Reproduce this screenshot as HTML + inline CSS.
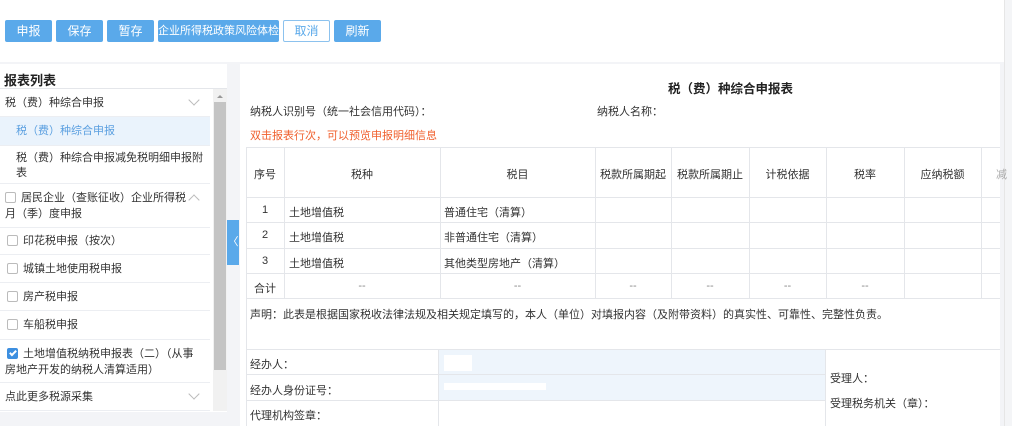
<!DOCTYPE html>
<html><head><meta charset="utf-8"><style>
*{margin:0;padding:0;box-sizing:border-box}
body{width:1012px;height:426px;overflow:hidden;background:#fff;font-family:"Liberation Sans","Noto Sans CJK SC",sans-serif;font-size:11px;color:#333;position:relative}
.a{position:absolute;white-space:nowrap}
.btn{position:absolute;top:20px;height:22px;background:#5aa9ea;color:#fff;font-size:12px;line-height:22px;text-align:center;border-radius:2px;white-space:nowrap;overflow:hidden}
.btn.o{background:#fff;color:#5aa9ea;border:1px solid #8cc2ee;line-height:20px}
.it{position:absolute;left:0;width:210px;border-bottom:1px solid #eceef2;font-size:11px;color:#333;white-space:nowrap}
.cb{display:inline-block;width:11px;height:11px;border:1px solid #bbb;border-radius:2px;vertical-align:-2px;margin-right:5px;background:#fff;position:relative}
.chev{position:absolute;right:12px;width:8px;height:8px;border-right:1px solid #bbb;border-bottom:1px solid #bbb}
.hl{position:absolute;background:#e4e6ea;height:1px}
.vl{position:absolute;background:#e4e6ea;width:1px}
.c{position:absolute;text-align:center;white-space:nowrap}
</style></head><body>
<div class="btn" style="left:5px;width:47px">申报</div>
<div class="btn" style="left:56px;width:47px">保存</div>
<div class="btn" style="left:107px;width:47px">暂存</div>
<div class="btn" style="left:158px;width:121px;font-size:11px">企业所得税政策风险体检</div>
<div class="btn o" style="left:283px;width:47px">取消</div>
<div class="btn" style="left:334px;width:47px">刷新</div>
<div class="a" style="left:1004px;top:0;width:8px;height:426px;background:#f4f5f7;border-left:1px solid #e6e6e6"></div>
<div class="a" style="left:0;top:62px;width:1004px;height:364px;background:#f3f4f7"></div>
<!-- left panel -->
<div class="a" style="left:0;top:64px;width:227px;height:348px;background:#fff"></div>
<div class="a" style="left:4px;top:70px;font-weight:bold;font-size:13px;color:#222">报表列表</div>
<div class="hl" style="left:0;top:88px;width:227px"></div>
<div class="a" style="left:213px;top:89px;width:14px;height:322px;background:#f1f1f1"></div>
<div class="a" style="left:214px;top:102px;width:12px;height:268px;background:#c4c4c4"></div>
<div class="a" style="left:217px;top:92px;width:0;height:0;border:3px solid transparent;border-bottom:3px solid #999"></div>
<div class="it" style="top:89px;height:28px;line-height:28px;padding-left:5px">税（费）种综合申报<span class="chev" style="top:7px;transform:rotate(45deg)"></span></div>
<div class="it" style="top:117px;height:29px;line-height:29px;padding-left:16px;background:#eaf3fc;color:#5a9fe0">税（费）种综合申报</div>
<div class="it" style="top:146px;height:38px;padding:5px 0 0 16px;line-height:15px">税（费）种综合申报减免税明细申报附<br>表</div>
<div class="it" style="top:184px;height:44px;padding:6px 0 0 5px;line-height:16px"><span class="cb"></span>居民企业（查账征收）企业所得税<br>月（季）度申报<span class="chev" style="top:12px;transform:rotate(-135deg)"></span></div>
<div class="it" style="top:228px;height:27px;line-height:27px;padding-left:7px"><span class="cb"></span>印花税申报（按次）</div>
<div class="it" style="top:255px;height:28px;line-height:28px;padding-left:7px"><span class="cb"></span>城镇土地使用税申报</div>
<div class="it" style="top:283px;height:28px;line-height:28px;padding-left:7px"><span class="cb"></span>房产税申报</div>
<div class="it" style="top:311px;height:29px;line-height:29px;padding-left:7px"><span class="cb"></span>车船税申报</div>
<div class="it" style="top:340px;height:43px;padding:6px 0 0 7px;line-height:16px"><span class="cb" style="background:#3d8fe0;border-color:#3d8fe0"><span class="a" style="left:3px;top:0px;width:4px;height:7px;border-right:2px solid #fff;border-bottom:2px solid #fff;transform:rotate(45deg)"></span></span>土地增值税纳税申报表（二）（从事<br><span style="margin-left:-2px">房地产开发的纳税人清算适用）</span></div>
<div class="it" style="top:383px;height:28px;line-height:28px;padding-left:5px">点此更多税源采集<span class="chev" style="top:7px;transform:rotate(45deg)"></span></div>
<div class="a" style="left:227px;top:220px;width:12px;height:45px;background:#5aa9ea;color:#fff;font-size:11px;line-height:45px;text-align:center">〈</div>
<!-- right panel -->
<div class="a" style="left:240px;top:64px;width:760px;height:362px;background:#fff"></div>
<div class="a" style="left:668px;top:78px;font-weight:bold;font-size:12.5px;color:#222">税（费）种综合申报表</div>
<div class="a" style="left:250px;top:103px">纳税人识别号（统一社会信用代码）：</div>
<div class="a" style="left:597px;top:103px">纳税人名称：</div>
<div class="a" style="left:250px;top:127px;color:#f0602e">双击报表行次，可以预览申报明细信息</div>
<div class="hl" style="left:246px;top:147px;width:754px"></div>
<div class="hl" style="left:246px;top:197px;width:754px"></div>
<div class="hl" style="left:246px;top:222px;width:754px"></div>
<div class="hl" style="left:246px;top:248px;width:754px"></div>
<div class="hl" style="left:246px;top:273px;width:754px"></div>
<div class="hl" style="left:246px;top:298px;width:754px"></div>
<div class="vl" style="left:246px;top:147px;height:279px"></div>
<div class="vl" style="left:284px;top:147px;height:151px"></div>
<div class="vl" style="left:440px;top:147px;height:151px"></div>
<div class="vl" style="left:595px;top:147px;height:151px"></div>
<div class="vl" style="left:671px;top:147px;height:151px"></div>
<div class="vl" style="left:749px;top:147px;height:151px"></div>
<div class="vl" style="left:826px;top:147px;height:151px"></div>
<div class="vl" style="left:904px;top:147px;height:151px"></div>
<div class="vl" style="left:981px;top:147px;height:151px"></div>
<div class="c" style="left:246px;width:38px;top:166px">序号</div>
<div class="c" style="left:284px;width:156px;top:166px">税种</div>
<div class="c" style="left:440px;width:155px;top:166px">税目</div>
<div class="c" style="left:595px;width:76px;top:166px">税款所属期起</div>
<div class="c" style="left:671px;width:78px;top:166px">税款所属期止</div>
<div class="c" style="left:749px;width:77px;top:166px">计税依据</div>
<div class="c" style="left:826px;width:78px;top:166px">税率</div>
<div class="c" style="left:904px;width:77px;top:166px">应纳税额</div>
<div class="a" style="left:996px;top:166px;color:#aaa">减</div>
<div class="c" style="left:246px;width:38px;top:204px">1</div><div class="a" style="left:289px;top:204px">土地增值税</div><div class="a" style="left:444px;top:204px">普通住宅（清算）</div>
<div class="c" style="left:246px;width:38px;top:229px">2</div><div class="a" style="left:289px;top:229px">土地增值税</div><div class="a" style="left:444px;top:229px">非普通住宅（清算）</div>
<div class="c" style="left:246px;width:38px;top:255px">3</div><div class="a" style="left:289px;top:255px">土地增值税</div><div class="a" style="left:444px;top:255px">其他类型房地产（清算）</div>
<div class="c" style="left:246px;width:38px;top:280px">合计</div>
<div class="c" style="left:284px;width:156px;top:280px;color:#888">--</div>
<div class="c" style="left:440px;width:155px;top:280px;color:#888">--</div>
<div class="c" style="left:595px;width:76px;top:280px;color:#888">--</div>
<div class="c" style="left:671px;width:78px;top:280px;color:#888">--</div>
<div class="c" style="left:749px;width:77px;top:280px;color:#888">--</div>
<div class="c" style="left:826px;width:78px;top:280px;color:#888">--</div>
<div class="a" style="left:250px;top:306px">声明：此表是根据国家税收法律法规及相关规定填写的，本人（单位）对填报内容（及附带资料）的真实性、可靠性、完整性负责。</div>
<div class="a" style="left:438px;top:349px;width:387px;height:51px;background:#eef5fc"></div>
<div class="a" style="left:444px;top:355px;width:28px;height:16px;background:#fff"></div>
<div class="a" style="left:444px;top:383px;width:102px;height:7px;background:#fff"></div>
<div class="hl" style="left:246px;top:349px;width:754px"></div>
<div class="hl" style="left:246px;top:374px;width:579px"></div>
<div class="hl" style="left:246px;top:400px;width:579px"></div>
<div class="vl" style="left:438px;top:349px;height:77px"></div>
<div class="vl" style="left:825px;top:349px;height:77px"></div>
<div class="a" style="left:250px;top:356px">经办人：</div>
<div class="a" style="left:250px;top:382px">经办人身份证号：</div>
<div class="a" style="left:250px;top:407px">代理机构签章：</div>
<div class="a" style="left:830px;top:370px">受理人：</div>
<div class="a" style="left:830px;top:395px">受理税务机关（章）：</div>
</body></html>
